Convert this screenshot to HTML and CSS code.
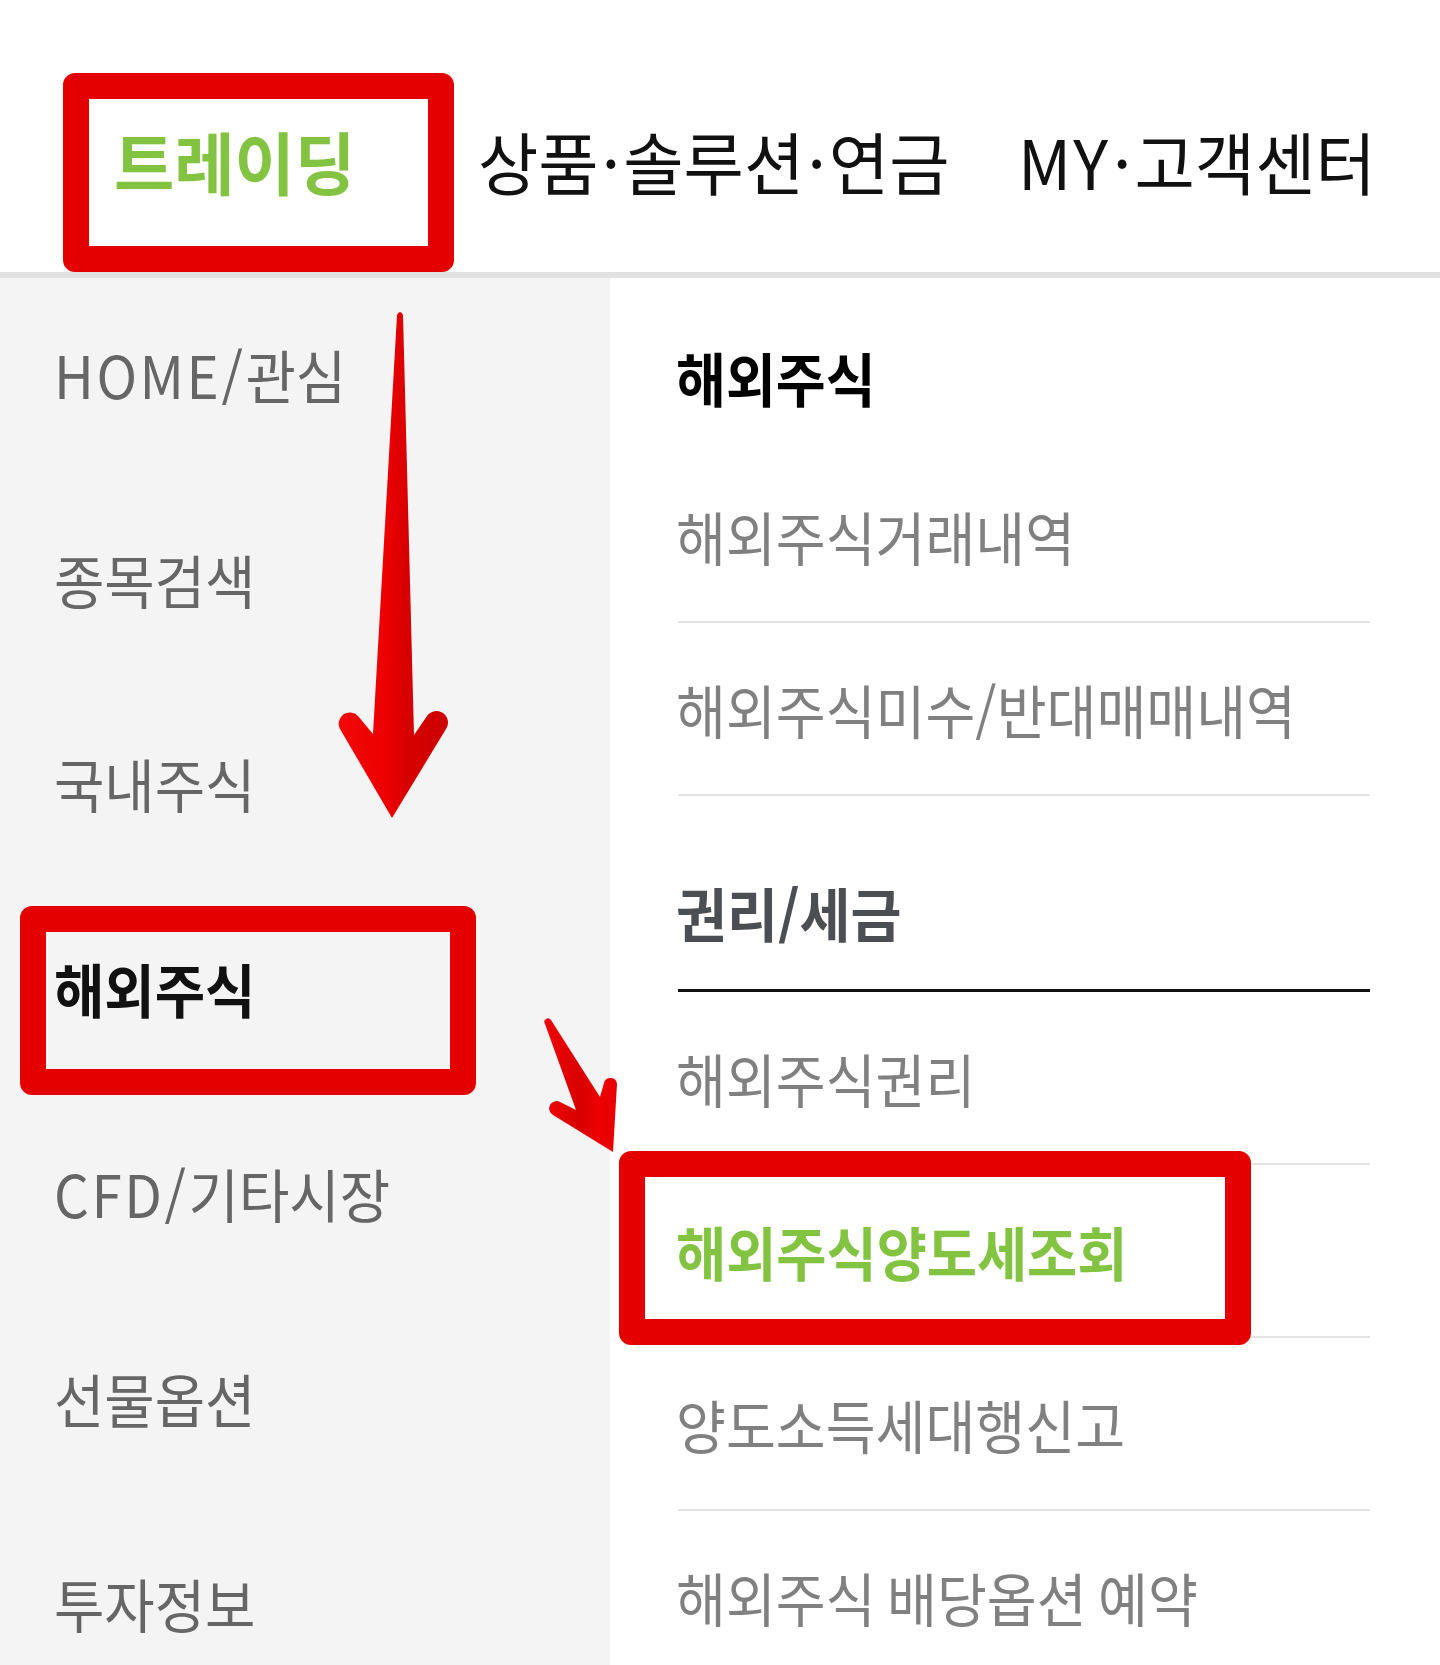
FILE: index.html
```html
<!DOCTYPE html>
<html lang="ko">
<head>
<meta charset="utf-8">
<title>트레이딩 메뉴</title>
<link rel="stylesheet" href="styles.css">
</head>
<body>
<div class="page">
  <header class="gnb">
    <nav class="gnb-list">
      <a class="gnb-item is-active" href="#"><span class="txt">트레이딩</span></a>
      <a class="gnb-item" href="#"><span class="txt">상품<span class="dot">·</span>솔루션<span class="dot">·</span>연금</span></a>
      <a class="gnb-item" href="#"><span class="txt"><span class="en">MY</span><span class="dot">·</span>고객센터</span></a>
    </nav>
  </header>

  <div class="menu">
    <ul class="lnb">
      <li class="lnb-item"><span class="txt"><span class="en">HOME/</span>관심</span></li>
      <li class="lnb-item"><span class="txt">종목검색</span></li>
      <li class="lnb-item"><span class="txt">국내주식</span></li>
      <li class="lnb-item is-active"><span class="txt">해외주식</span></li>
      <li class="lnb-item"><span class="txt"><span class="en">CFD/</span>기타시장</span></li>
      <li class="lnb-item"><span class="txt">선물옵션</span></li>
      <li class="lnb-item"><span class="txt">투자정보</span></li>
    </ul>

    <div class="sub">
      <section class="grp">
        <h3 class="grp-title"><span class="txt">해외주식</span></h3>
        <ul class="sub-list">
          <li class="sub-item"><span class="txt">해외주식거래내역</span></li>
          <li class="sub-item"><span class="txt">해외주식미수/반대매매내역</span></li>
        </ul>
      </section>
      <section class="grp is-open">
        <h3 class="grp-title"><span class="txt">권리/세금</span></h3>
        <ul class="sub-list">
          <li class="sub-item"><span class="txt">해외주식권리</span></li>
          <li class="sub-item is-current"><span class="txt">해외주식양도세조회</span></li>
          <li class="sub-item"><span class="txt">양도소득세대행신고</span></li>
          <li class="sub-item"><span class="txt">해외주식 배당옵션 예약</span></li>
        </ul>
      </section>
    </div>
  </div>

  <div class="mark mark-gnb"></div>
  <div class="mark mark-lnb"></div>
  <div class="mark mark-sub"></div>

  <svg class="arrows" width="1440" height="1665" viewBox="0 0 1440 1665" aria-hidden="true">
    <defs>
      <linearGradient id="g1" x1="0" y1="0" x2="1" y2="0">
        <stop offset="0" stop-color="#f20808"/>
        <stop offset="0.45" stop-color="#ec0000"/>
        <stop offset="0.62" stop-color="#d80000"/>
        <stop offset="1" stop-color="#cc0000"/>
      </linearGradient>
      <linearGradient id="g2" x1="0" y1="0" x2="1" y2="0">
        <stop offset="0" stop-color="#ef0505"/>
        <stop offset="0.5" stop-color="#d90000"/>
        <stop offset="0.75" stop-color="#ee0000"/>
        <stop offset="1" stop-color="#e60000"/>
      </linearGradient>
    </defs>
    <path fill="url(#g1)" d="M397 315 Q400 309 403 315 L414 735 L427 716 A11.5 11.5 0 0 1 446 729 L392 818 L340 729 A11.2 11.2 0 0 1 358 716 L373 734 Z"/>
    <path fill="url(#g2)" d="M545 1024 A3.2 3.2 0 0 1 551 1020 L600 1097 L604 1083 A6.6 6.6 0 0 1 617 1084 L613 1152 L553 1115 A6.8 6.8 0 0 1 560 1102 L576 1110 Z"/>
  </svg>
</div>
</body>
</html>
```

FILE: styles.css
```css
* {
  box-sizing: border-box;
  margin: 0;
  padding: 0;
}

html,
body {
  width: 1440px;
  height: 1665px;
  overflow: hidden;
  background: #fff;
}

body {
  font-family: "Noto Sans CJK KR", "Noto Sans", sans-serif;
  color: #111;
}

.page {
  position: relative;
  width: 1440px;
  height: 1665px;
}

.txt {
  display: inline-block;
  white-space: nowrap;
  transform: scaleX(0.944);
  transform-origin: 0 50%;
}

.en {
  letter-spacing: 2.7px;
}

/* top navigation */
.gnb {
  height: 278px;
  padding-top: 50px;
  border-bottom: 6px solid #e1e1e1;
  display: flex;
  align-items: center;
}

.gnb-list {
  display: grid;
  grid-template-columns: 364px 540px auto;
  padding-left: 114px;
}

.gnb-item {
  font-size: 68px;
  line-height: 1;
  color: #111;
  text-decoration: none;
}

.gnb-item .txt {
  transform: scaleX(0.964);
}

.gnb-item .en {
  letter-spacing: 2px;
}

.gnb-item .dot {
  margin: 0 3.3px;
}

.gnb-item.is-active {
  color: #82c341;
  font-weight: 700;
}

/* menu body */
.menu {
  display: flex;
  height: 1387px;
}

.lnb {
  width: 610px;
  flex: none;
  background: #f4f4f4;
  list-style: none;
  padding-left: 54px;
}

.lnb-item {
  height: 204.8px;
  padding-bottom: 13px;
  display: flex;
  align-items: center;
  font-size: 58px;
  line-height: 1;
  color: #666;
}

.lnb-item.is-active {
  color: #111;
  font-weight: 700;
}

.sub {
  flex: 1;
  padding: 0 70px 0 68px;
}

.sub .txt {
  margin-left: -2px;
  transform: scaleX(0.935);
  word-spacing: -4px;
}

.grp-title {
  font-size: 58px;
  line-height: 1;
  font-weight: 700;
  color: #000;
  padding: 70px 0 44px;
}

.grp.is-open .grp-title {
  color: #4b4e52;
  padding: 87px 0 48px;
  border-bottom: 3px solid #111;
}

.grp.is-open .grp-title .txt {
  transform: scaleX(0.955);
}

.sub-list {
  list-style: none;
}

.sub-item {
  height: 173px;
  border-bottom: 2px solid #e3e3e3;
  display: flex;
  align-items: center;
  font-size: 58px;
  line-height: 1;
  color: #808080;
}

.sub-item.is-current {
  color: #82c341;
  font-weight: 700;
}

.sub-item.is-current .txt {
  transform: scaleX(0.94);
}

/* annotation overlays */
.mark {
  position: absolute;
  border: 26px solid #e50000;
  border-radius: 12px;
}

.mark-gnb {
  left: 63px;
  top: 73px;
  width: 391px;
  height: 199px;
}

.mark-lnb {
  left: 20px;
  top: 906px;
  width: 456px;
  height: 189px;
}

.mark-sub {
  left: 619px;
  top: 1151px;
  width: 632px;
  height: 194px;
}

.arrows {
  position: absolute;
  left: 0;
  top: 0;
  pointer-events: none;
}
```
